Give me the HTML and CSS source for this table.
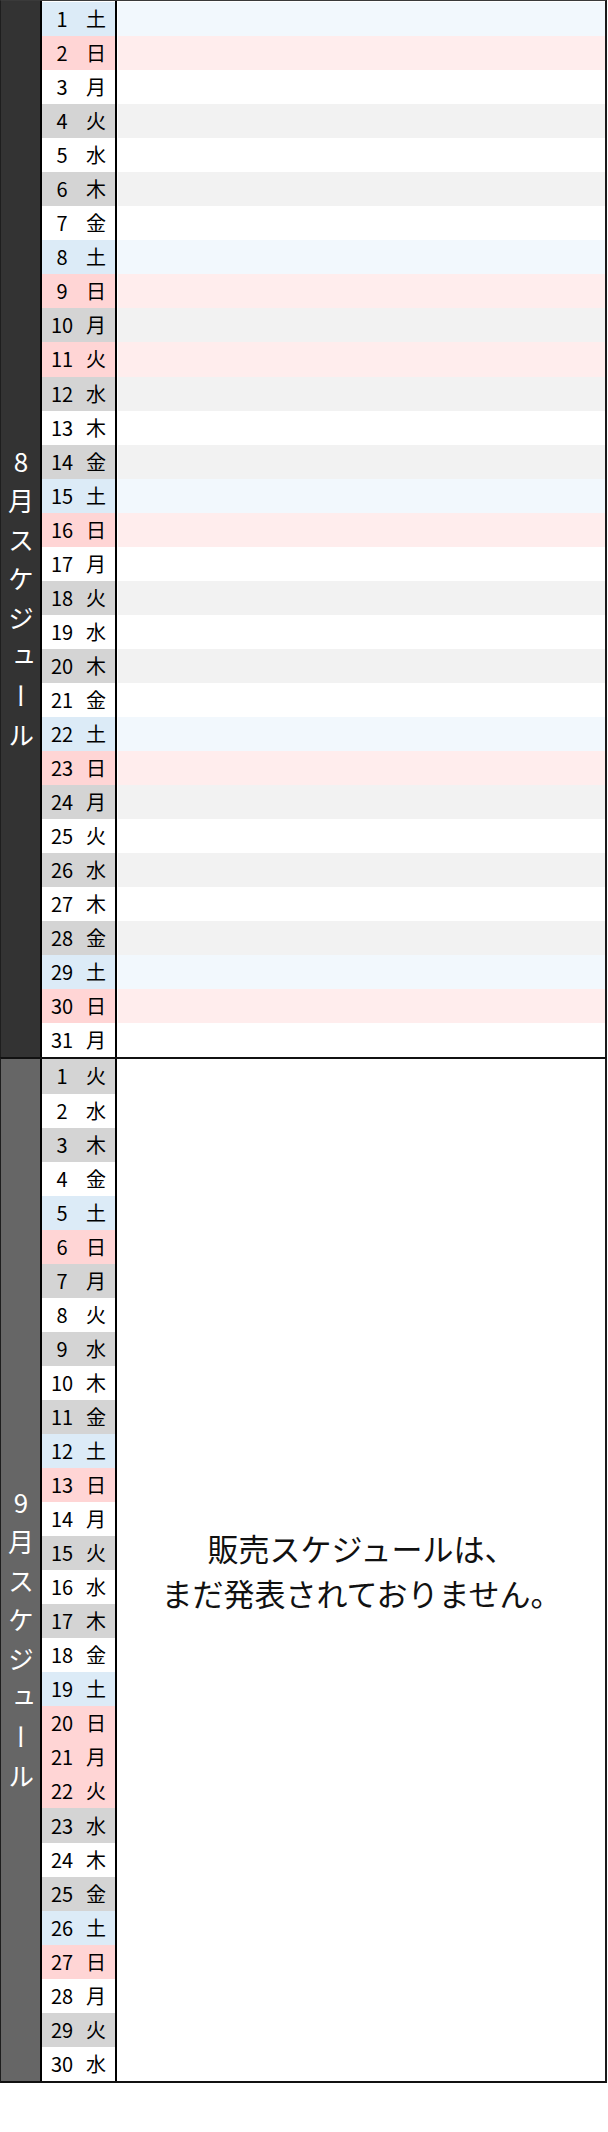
FILE: index.html
```html
<!DOCTYPE html>
<html lang="ja">
<head>
<meta charset="utf-8">
<title>販売スケジュール</title>
<link rel="stylesheet" href="styles.css">
</head>
<body>
<div class="schedule">
  <section class="month month-aug">
    <div class="label"><span class="label-text">8月スケジュール</span></div>
    <div class="dates">
      <div class="date sat"><span class="num">1</span><span class="wd">土</span></div>
      <div class="date sun"><span class="num">2</span><span class="wd">日</span></div>
      <div class="date"><span class="num">3</span><span class="wd">月</span></div>
      <div class="date"><span class="num">4</span><span class="wd">火</span></div>
      <div class="date"><span class="num">5</span><span class="wd">水</span></div>
      <div class="date"><span class="num">6</span><span class="wd">木</span></div>
      <div class="date"><span class="num">7</span><span class="wd">金</span></div>
      <div class="date sat"><span class="num">8</span><span class="wd">土</span></div>
      <div class="date sun"><span class="num">9</span><span class="wd">日</span></div>
      <div class="date"><span class="num">10</span><span class="wd">月</span></div>
      <div class="date sun"><span class="num">11</span><span class="wd">火</span></div>
      <div class="date"><span class="num">12</span><span class="wd">水</span></div>
      <div class="date"><span class="num">13</span><span class="wd">木</span></div>
      <div class="date"><span class="num">14</span><span class="wd">金</span></div>
      <div class="date sat"><span class="num">15</span><span class="wd">土</span></div>
      <div class="date sun"><span class="num">16</span><span class="wd">日</span></div>
      <div class="date"><span class="num">17</span><span class="wd">月</span></div>
      <div class="date"><span class="num">18</span><span class="wd">火</span></div>
      <div class="date"><span class="num">19</span><span class="wd">水</span></div>
      <div class="date"><span class="num">20</span><span class="wd">木</span></div>
      <div class="date"><span class="num">21</span><span class="wd">金</span></div>
      <div class="date sat"><span class="num">22</span><span class="wd">土</span></div>
      <div class="date sun"><span class="num">23</span><span class="wd">日</span></div>
      <div class="date"><span class="num">24</span><span class="wd">月</span></div>
      <div class="date"><span class="num">25</span><span class="wd">火</span></div>
      <div class="date"><span class="num">26</span><span class="wd">水</span></div>
      <div class="date"><span class="num">27</span><span class="wd">木</span></div>
      <div class="date"><span class="num">28</span><span class="wd">金</span></div>
      <div class="date sat"><span class="num">29</span><span class="wd">土</span></div>
      <div class="date sun"><span class="num">30</span><span class="wd">日</span></div>
      <div class="date"><span class="num">31</span><span class="wd">月</span></div>
    </div>
    <div class="cells">
      <div class="cell sat"></div>
      <div class="cell sun"></div>
      <div class="cell"></div>
      <div class="cell"></div>
      <div class="cell"></div>
      <div class="cell"></div>
      <div class="cell"></div>
      <div class="cell sat"></div>
      <div class="cell sun"></div>
      <div class="cell"></div>
      <div class="cell sun"></div>
      <div class="cell"></div>
      <div class="cell"></div>
      <div class="cell"></div>
      <div class="cell sat"></div>
      <div class="cell sun"></div>
      <div class="cell"></div>
      <div class="cell"></div>
      <div class="cell"></div>
      <div class="cell"></div>
      <div class="cell"></div>
      <div class="cell sat"></div>
      <div class="cell sun"></div>
      <div class="cell"></div>
      <div class="cell"></div>
      <div class="cell"></div>
      <div class="cell"></div>
      <div class="cell"></div>
      <div class="cell sat"></div>
      <div class="cell sun"></div>
      <div class="cell"></div>
    </div>
  </section>
  <section class="month month-sep">
    <div class="label"><span class="label-text">9月スケジュール</span></div>
    <div class="dates">
      <div class="date"><span class="num">1</span><span class="wd">火</span></div>
      <div class="date"><span class="num">2</span><span class="wd">水</span></div>
      <div class="date"><span class="num">3</span><span class="wd">木</span></div>
      <div class="date"><span class="num">4</span><span class="wd">金</span></div>
      <div class="date sat"><span class="num">5</span><span class="wd">土</span></div>
      <div class="date sun"><span class="num">6</span><span class="wd">日</span></div>
      <div class="date"><span class="num">7</span><span class="wd">月</span></div>
      <div class="date"><span class="num">8</span><span class="wd">火</span></div>
      <div class="date"><span class="num">9</span><span class="wd">水</span></div>
      <div class="date"><span class="num">10</span><span class="wd">木</span></div>
      <div class="date"><span class="num">11</span><span class="wd">金</span></div>
      <div class="date sat"><span class="num">12</span><span class="wd">土</span></div>
      <div class="date sun"><span class="num">13</span><span class="wd">日</span></div>
      <div class="date"><span class="num">14</span><span class="wd">月</span></div>
      <div class="date"><span class="num">15</span><span class="wd">火</span></div>
      <div class="date"><span class="num">16</span><span class="wd">水</span></div>
      <div class="date"><span class="num">17</span><span class="wd">木</span></div>
      <div class="date"><span class="num">18</span><span class="wd">金</span></div>
      <div class="date sat"><span class="num">19</span><span class="wd">土</span></div>
      <div class="date sun"><span class="num">20</span><span class="wd">日</span></div>
      <div class="date sun"><span class="num">21</span><span class="wd">月</span></div>
      <div class="date sun"><span class="num">22</span><span class="wd">火</span></div>
      <div class="date"><span class="num">23</span><span class="wd">水</span></div>
      <div class="date"><span class="num">24</span><span class="wd">木</span></div>
      <div class="date"><span class="num">25</span><span class="wd">金</span></div>
      <div class="date sat"><span class="num">26</span><span class="wd">土</span></div>
      <div class="date sun"><span class="num">27</span><span class="wd">日</span></div>
      <div class="date"><span class="num">28</span><span class="wd">月</span></div>
      <div class="date"><span class="num">29</span><span class="wd">火</span></div>
      <div class="date"><span class="num">30</span><span class="wd">水</span></div>
    </div>
    <div class="notice">
      <p class="notice-text">販売スケジュールは、<br>まだ発表されておりません。</p>
    </div>
  </section>
</div>
</body>
</html>
```
FILE: styles.css
```css
* {
  box-sizing: border-box;
  margin: 0;
  padding: 0;
}

body {
  margin: 0;
  background: #fff;
  font-family: "Noto Sans CJK JP", "Noto Sans", sans-serif;
  color: #111;
}

.schedule {
  width: 607px;
}

.month {
  display: flex;
  border-left: 1px solid #1e1e1e;
  border-right: 2px solid #1a1a1a;
}

.month-aug {
  border-top: 1px solid #3a3a3a;
}

.month-sep {
  border-top: 2px solid #111;
  border-bottom: 2px solid #111;
}

.label {
  flex: none;
  width: 41px;
  border-right: 2px solid #000;
  display: flex;
  justify-content: center;
  align-items: center;
  color: #fff;
}

.month-aug .label {
  background: #333;
  padding-top: 152px;
}

.month-sep .label {
  background: #666;
  padding-top: 152px;
}

.label-text {
  writing-mode: vertical-rl;
  text-orientation: upright;
  font-size: 26px;
  letter-spacing: 13px;
  line-height: 1;
}

.dates {
  flex: none;
  width: 75px;
  border-right: 2px solid #000;
}

.month-aug .dates,
.month-aug .cells {
  padding-top: 1px;
}

.date {
  display: flex;
  align-items: center;
  height: 34.06px;
  font-size: 20px;
  line-height: 34px;
  color: #000;
}

.num {
  width: 40px;
  text-align: center;
}

.wd {
  margin-left: 4px;
}

.month-aug .date:nth-child(even),
.month-sep .date:nth-child(odd) {
  background: #d4d4d4;
}

.cells,
.notice {
  flex: 1;
  margin-left: 1px;
}

.cell {
  height: 34.06px;
}

.cells .cell:nth-child(even) {
  background: #f2f2f2;
}

.month .dates .date.sat {
  background: #dcebf7;
}

.month .dates .date.sun {
  background: #ffd5d5;
}

.month .cells .cell.sat {
  background: #f2f8fd;
}

.month .cells .cell.sun {
  background: #ffeded;
}

.notice {
  display: flex;
  align-items: center;
  justify-content: center;
}

.notice-text {
  font-size: 31px;
  line-height: 45px;
  text-align: center;
  color: #111;
}
```
